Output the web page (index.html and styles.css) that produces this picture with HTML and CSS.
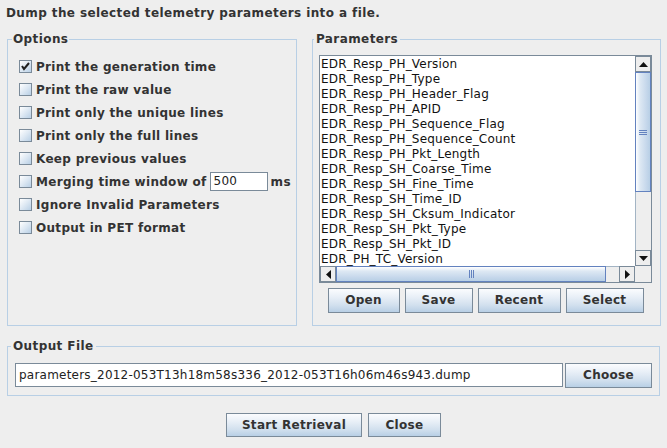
FILE: index.html
```html
<!DOCTYPE html>
<html>
<head>
<meta charset="utf-8">
<link rel="stylesheet" href="styles.css">
</head>
<body>
<div class="title">Dump the selected telemetry parameters into a file.</div>
<div class="top">
  <fieldset class="group options">
    <legend>Options</legend>
    <div class="opt"><span class="cb"><svg width="11" height="11" viewBox="0 0 11 11"><path d="M2 5 L4 8 L9 2" fill="none" stroke="#222" stroke-width="2"/></svg></span>Print the generation time</div>
    <div class="opt"><span class="cb"></span>Print the raw value</div>
    <div class="opt"><span class="cb"></span>Print only the unique lines</div>
    <div class="opt"><span class="cb"></span>Print only the full lines</div>
    <div class="opt"><span class="cb"></span>Keep previous values</div>
    <div class="opt"><span class="cb"></span>Merging time window of <span class="field small">500</span><span class="unit">ms</span></div>
    <div class="opt"><span class="cb"></span>Ignore Invalid Parameters</div>
    <div class="opt"><span class="cb"></span>Output in PET format</div>
  </fieldset>
  <fieldset class="group params">
    <legend>Parameters</legend>
    <div class="scrollpane">
      <div class="viewport">
        <div class="item">EDR_Resp_PH_Version</div>
        <div class="item">EDR_Resp_PH_Type</div>
        <div class="item">EDR_Resp_PH_Header_Flag</div>
        <div class="item">EDR_Resp_PH_APID</div>
        <div class="item">EDR_Resp_PH_Sequence_Flag</div>
        <div class="item">EDR_Resp_PH_Sequence_Count</div>
        <div class="item">EDR_Resp_PH_Pkt_Length</div>
        <div class="item">EDR_Resp_SH_Coarse_Time</div>
        <div class="item">EDR_Resp_SH_Fine_Time</div>
        <div class="item">EDR_Resp_SH_Time_ID</div>
        <div class="item">EDR_Resp_SH_Cksum_Indicator</div>
        <div class="item">EDR_Resp_SH_Pkt_Type</div>
        <div class="item">EDR_Resp_SH_Pkt_ID</div>
        <div class="item">EDR_PH_TC_Version</div>
      </div>
      <div class="vbar">
        <div class="arrow"><svg width="9" height="5" viewBox="0 0 9 5"><path d="M0 5 L4.5 0 L9 5 Z" fill="#111"/></svg></div>
        <div class="vtrack">
          <div class="vthumb"><span class="hgrip"></span></div>
        </div>
        <div class="arrow"><svg width="9" height="5" viewBox="0 0 9 5"><path d="M0 0 L4.5 5 L9 0 Z" fill="#111"/></svg></div>
      </div>
      <div class="hbar">
        <div class="arrow"><svg width="5" height="9" viewBox="0 0 5 9"><path d="M5 0 L0 4.5 L5 9 Z" fill="#111"/></svg></div>
        <div class="htrack">
          <div class="hthumb"><span class="vgrip"></span></div>
        </div>
        <div class="arrow"><svg width="5" height="9" viewBox="0 0 5 9"><path d="M0 0 L5 4.5 L0 9 Z" fill="#111"/></svg></div>
      </div>
      <div class="corner"></div>
    </div>
    <div class="btnrow">
      <button class="btn w-open">Open</button>
      <button class="btn w-save">Save</button>
      <button class="btn w-recent">Recent</button>
      <button class="btn w-select">Select</button>
    </div>
  </fieldset>
</div>
<fieldset class="group output">
  <legend>Output File</legend>
  <div class="outrow">
    <div class="field big">parameters_2012-053T13h18m58s336_2012-053T16h06m46s943.dump</div>
    <button class="btn w-choose">Choose</button>
  </div>
</fieldset>
<div class="actions">
  <button class="btn w-start">Start Retrieval</button>
  <button class="btn w-close">Close</button>
</div>
</body>
</html>
```

FILE: styles.css
```css
html, body {
  margin: 0;
  padding: 0;
  background: #eeeeee;
  width: 667px;
  height: 448px;
  overflow: hidden;
  font-family: "DejaVu Sans", sans-serif;
  font-size: 12px;
  color: #333333;
}

.title {
  height: 32px;
  line-height: 27px;
  padding-left: 6px;
  font-weight: bold;
  letter-spacing: 0.4px;
}

.top {
  display: flex;
  padding-left: 7px;
  gap: 15px;
}

.group {
  margin: 0;
  border: 1px solid #b8cfe5;
  min-width: 0;
}

.group legend {
  font-weight: bold;
  line-height: 14px;
  height: 14px;
  padding: 0 2px;
  letter-spacing: 0.4px;
}

.options {
  box-sizing: border-box;
  width: 290px;
  height: 294px;
  padding: 9px 0 0 11px;
}
.options legend { margin-left: -7px; padding: 0 1px; }

.opt {
  height: 23px;
  display: flex;
  align-items: center;
  font-weight: bold;
  white-space: nowrap;
  letter-spacing: 0.3px;
}

.cb {
  width: 11px;
  height: 11px;
  border: 1px solid #7a8a99;
  background: linear-gradient(135deg, #ffffff 0%, #dde8f3 50%, #b8cfe5 100%);
  margin-right: 4px;
  display: flex;
  align-items: center;
  justify-content: center;
  flex: none;
}
.cb svg { display: block; }

.field {
  background: #ffffff;
  border: 1px solid #7a8a99;
  box-shadow: inset 1px 1px 0 #ffffff;
  color: #222;
  font-weight: normal;
  box-sizing: border-box;
  white-space: nowrap;
  overflow: hidden;
  letter-spacing: 0.2px;
}
.field.small {
  width: 58px;
  height: 19px;
  line-height: 17px;
  padding-left: 3px;
  margin-left: 3px;
}
.unit { margin-left: 3px; }

.params {
  box-sizing: border-box;
  width: 349px;
  height: 294px;
  padding: 9px 8px 0 6px;
}
.params legend { margin-left: -5px; padding: 0 2px; }

.scrollpane {
  height: 228px;
  box-sizing: border-box;
  border: 1px solid #7a8a99;
  display: grid;
  grid-template-columns: 1fr 16px;
  grid-template-rows: 210px 16px;
  background: #eeeeee;
}

.viewport {
  background: #ffffff;
  overflow: hidden;
  color: #111;
}
.item {
  height: 15px;
  line-height: 16px;
  white-space: nowrap;
  padding-left: 1px;
  letter-spacing: 0.2px;
}

.vbar {
  display: flex;
  flex-direction: column;
  box-sizing: border-box;
}
.vbar .arrow {
  height: 16px;
  flex: none;
}
.arrow {
  box-sizing: border-box;
  border: 1px solid #7a8a99;
  background: #eeeeee;
  display: flex;
  align-items: center;
  justify-content: center;
}
.vtrack {
  flex: 1;
  background: #eeeeee;
  border-left: 1px solid #a3b4c4;
}
.vthumb {
  height: 120px;
  margin-left: -1px;
  box-sizing: border-box;
  border: 1px solid #6382bf;
  background: linear-gradient(90deg, #ffffff 0%, #dde8f3 30%, #c8d9ec 70%, #b8cfe5 100%);
  display: flex;
  align-items: center;
  justify-content: center;
}
.hgrip {
  width: 8px;
  height: 5px;
  background: repeating-linear-gradient(#6382bf 0 1px, transparent 1px 2px);
}

.hbar {
  display: flex;
}
.hbar .arrow {
  width: 16px;
  flex: none;
}
.htrack {
  flex: 1;
  background: #eeeeee;
  display: flex;
  border-top: 1px solid #a3b4c4;
}
.hthumb {
  width: 270px;
  margin-top: -1px;
  box-sizing: border-box;
  border: 1px solid #6382bf;
  background: linear-gradient(#ffffff 0%, #dde8f3 30%, #c8d9ec 70%, #b8cfe5 100%);
  display: flex;
  align-items: center;
  justify-content: center;
}
.vgrip {
  width: 5px;
  height: 8px;
  background: repeating-linear-gradient(90deg, #6382bf 0 1px, transparent 1px 2px);
}
.corner { background: #eeeeee; }

.btnrow {
  display: flex;
  justify-content: center;
  gap: 5px;
  margin-top: 5px;
}

.btn {
  font-family: "DejaVu Sans", sans-serif;
  font-size: 12px;
  font-weight: bold;
  letter-spacing: 0.3px;
  color: #333333;
  border: 1px solid #7a8a99;
  background: linear-gradient(#fbfcfe 0%, #e8eff7 35%, #d2e0ee 70%, #b8cfe5 100%);
  height: 25px;
  padding: 0;
  margin: 0;
  box-sizing: border-box;
  line-height: 23px;
  text-align: center;
}
.w-open { width: 72px; }
.w-save { width: 68px; }
.w-recent { width: 83px; }
.w-select { width: 78px; }
.w-choose { width: 87px; }
.w-start { width: 136px; height: 24px; }
.w-close { width: 73px; height: 24px; }

.output {
  margin: 13px 0 0 7px;
  width: 653px;
  box-sizing: border-box;
  padding: 10px 0 7px 7px;
}
.output legend { margin-left: -4px; padding: 0 2px; }

.outrow {
  display: flex;
  gap: 2px;
  align-items: flex-start;
}
.field.big {
  width: 548px;
  height: 24px;
  line-height: 22px;
  padding-left: 3px;
  font-size: 12px;
  letter-spacing: 0.22px;
}

.actions {
  display: flex;
  justify-content: center;
  gap: 6px;
  margin-top: 17px;
}
```
